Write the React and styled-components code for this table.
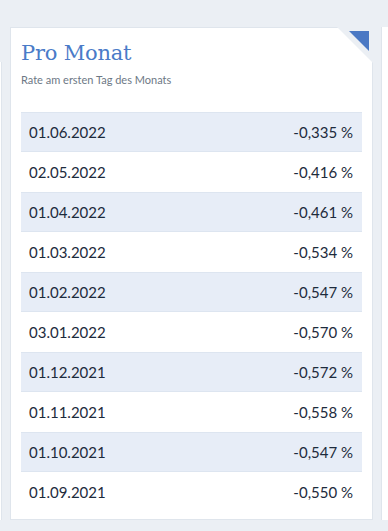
import React from "react";
import styled, { createGlobalStyle } from "styled-components";

const GlobalStyle = createGlobalStyle`
  html, body {
    margin: 0;
    padding: 0;
    background: #ebeff4;
    overflow: hidden;
  }
  body {
    font-family: Lato, "Noto Sans", sans-serif;
  }
`;

// strip of cards; only the edges of the neighbours are in view
const Strip = styled.div`
  display: flex;
  align-items: flex-start;
  gap: 8px;
  padding-top: 27px;
  height: 531px;
  box-sizing: border-box;
`;

const Stub = styled.div`
  flex: 0 0 ${(p) => (p.$side === "left" ? "2px" : "7px")};
  height: ${(p) => (p.$side === "left" ? "458px" : "493px")};
  margin-top: ${(p) => (p.$side === "left" ? "35px" : "0")};
  box-sizing: border-box;
  background: #fff;
  border-${(p) => (p.$side === "left" ? "right" : "left")}: 1px solid #dfe5ec;
`;

const Card = styled.section`
  position: relative;
  flex: 0 0 363px;
  height: 493px;
  box-sizing: border-box;
  background: #fff;
  border: 1px solid #dfe5ec;
  padding: 11px 10px 0 10px;
`;

// folded corner: a background-coloured fold with a blue triangle on it
const Fold = styled.span`
  position: absolute;
  top: -1px;
  right: -1px;
  width: 36px;
  height: 36px;
  background: #ebeff4;
  clip-path: polygon(0 0, 100% 0, 100% 100%);
`;

const Corner = styled.span`
  position: absolute;
  top: 3px;
  right: 3px;
  width: 20px;
  height: 20px;
  background: #4a78c4;
  clip-path: polygon(0 0, 100% 0, 100% 100%);
`;

const Title = styled.h2`
  margin: 0;
  font-family: "DejaVu Serif", "Liberation Serif", serif;
  font-weight: normal;
  font-size: 21px;
  line-height: 28px;
  color: #4a7bc8;
  letter-spacing: -0.2px;
`;

const Subtitle = styled.p`
  margin: 6px 0 0 0;
  font-size: 11px;
  line-height: 14px;
  color: #6d7885;
`;

const Table = styled.div`
  margin-top: 25px;
`;

const Row = styled.div`
  display: flex;
  justify-content: space-between;
  align-items: center;
  height: 40px;
  box-sizing: border-box;
  padding: 0 9px 0 8px;
  font-size: 15px;
  color: #1d2b3c;
  background: ${(p) => (p.$shaded ? "#e7edf7" : "#fff")};
  border-top: 1px solid ${(p) => (p.$shaded ? "#dde5f0" : "transparent")};
  border-bottom: 1px solid ${(p) => (p.$shaded ? "#dde5f0" : "transparent")};
`;

const rates = [
  ["01.06.2022", "-0,335 %"],
  ["02.05.2022", "-0,416 %"],
  ["01.04.2022", "-0,461 %"],
  ["01.03.2022", "-0,534 %"],
  ["01.02.2022", "-0,547 %"],
  ["03.01.2022", "-0,570 %"],
  ["01.12.2021", "-0,572 %"],
  ["01.11.2021", "-0,558 %"],
  ["01.10.2021", "-0,547 %"],
  ["01.09.2021", "-0,550 %"],
];

export default function App() {
  return (
    <>
      <GlobalStyle />
      <Strip>
        <Stub $side="left" />
        <Card>
          <Fold />
          <Corner />
          <Title>Pro Monat</Title>
          <Subtitle>Rate am ersten Tag des Monats</Subtitle>
          <Table>
            {rates.map(([date, rate], i) => (
              <Row key={date} $shaded={i % 2 === 0}>
                <span>{date}</span>
                <span>{rate}</span>
              </Row>
            ))}
          </Table>
        </Card>
        <Stub $side="right" />
      </Strip>
    </>
  );
}
